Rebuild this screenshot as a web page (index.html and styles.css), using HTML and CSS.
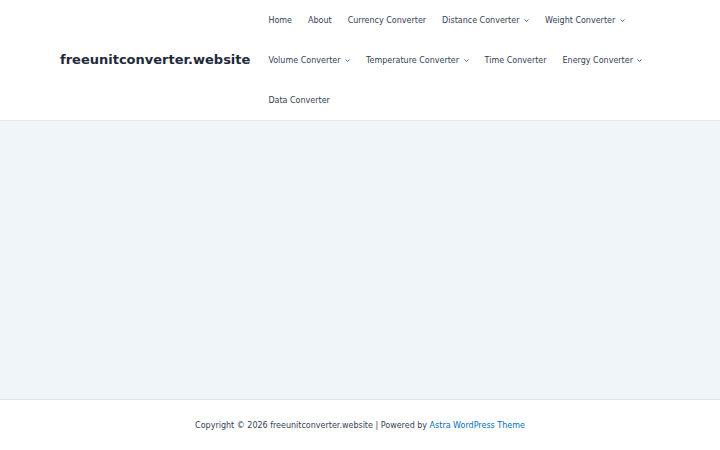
FILE: index.html
```html
<!DOCTYPE html>
<html lang="en">
<head>
<meta charset="utf-8">
<title>freeunitconverter.website</title>
<link rel="stylesheet" href="styles.css">
</head>
<body>
<header class="site-header">
  <div class="container header-inner">
    <div class="brand"><a href="#" class="site-title">freeunitconverter.website</a></div>
    <nav class="main-nav">
      <ul class="menu">
        <li class="menu-item"><a href="#">Home</a></li>
        <li class="menu-item"><a href="#">About</a></li>
        <li class="menu-item"><a href="#">Currency Converter</a></li>
        <li class="menu-item"><a href="#">Distance Converter<svg class="caret" viewBox="0 0 10 6" width="5" height="3"><path d="M1 1l4 4 4-4" fill="none" stroke="currentColor" stroke-width="1.6"/></svg></a></li>
        <li class="menu-item"><a href="#">Weight Converter<svg class="caret" viewBox="0 0 10 6" width="5" height="3"><path d="M1 1l4 4 4-4" fill="none" stroke="currentColor" stroke-width="1.6"/></svg></a></li>
        <li class="menu-item"><a href="#">Volume Converter<svg class="caret" viewBox="0 0 10 6" width="5" height="3"><path d="M1 1l4 4 4-4" fill="none" stroke="currentColor" stroke-width="1.6"/></svg></a></li>
        <li class="menu-item"><a href="#">Temperature Converter<svg class="caret" viewBox="0 0 10 6" width="5" height="3"><path d="M1 1l4 4 4-4" fill="none" stroke="currentColor" stroke-width="1.6"/></svg></a></li>
        <li class="menu-item"><a href="#">Time Converter</a></li>
        <li class="menu-item"><a href="#">Energy Converter<svg class="caret" viewBox="0 0 10 6" width="5" height="3"><path d="M1 1l4 4 4-4" fill="none" stroke="currentColor" stroke-width="1.6"/></svg></a></li>
        <li class="menu-item"><a href="#">Data Converter</a></li>
      </ul>
    </nav>
  </div>
</header>
<main class="site-content"></main>
<footer class="site-footer">
  <div class="footer-text">Copyright © 2026 freeunitconverter.website | Powered by <a href="#" class="footer-link">Astra WordPress Theme</a></div>
</footer>
</body>
</html>
```
FILE: styles.css
```css
* { box-sizing: border-box; }
html, body { margin: 0; padding: 0; }
body {
  font-family: "DejaVu Sans", sans-serif;
  color: #334155;
  background: #ffffff;
}
a { text-decoration: none; color: inherit; }
.site-header {
  background: #ffffff;
  border-bottom: 1px solid #e3e8ee;
}
.container {
  width: 600px;
  margin: 0 auto;
}
.header-inner {
  display: flex;
  align-items: center;
  height: 120px;
}
.brand { flex: none; padding-right: 10px; padding-bottom: 4px; }
.site-title {
  font-weight: bold;
  font-size: 13px;
  color: #1e293b;
}
.main-nav { flex: 1; }
.menu {
  list-style: none;
  margin: 0;
  padding: 0;
  display: flex;
  flex-wrap: wrap;
}
.menu-item a {
  display: flex;
  align-items: center;
  height: 40px;
  padding: 0 8px;
  font-size: 8px;
  color: #334155;
}
.caret {
  margin-left: 4.5px;
  margin-top: 1px;
  display: block;
}
.site-content {
  background: #f0f5fa;
  height: 278px;
}
.site-footer {
  border-top: 1px solid #dfe4ea;
  background: #ffffff;
  height: 51px;
  display: flex;
  justify-content: center;
  padding-top: 21px;
}
.footer-text {
  font-size: 8px;
  line-height: 10px;
  color: #334155;
}
.footer-link { color: #0170b9; }
```
